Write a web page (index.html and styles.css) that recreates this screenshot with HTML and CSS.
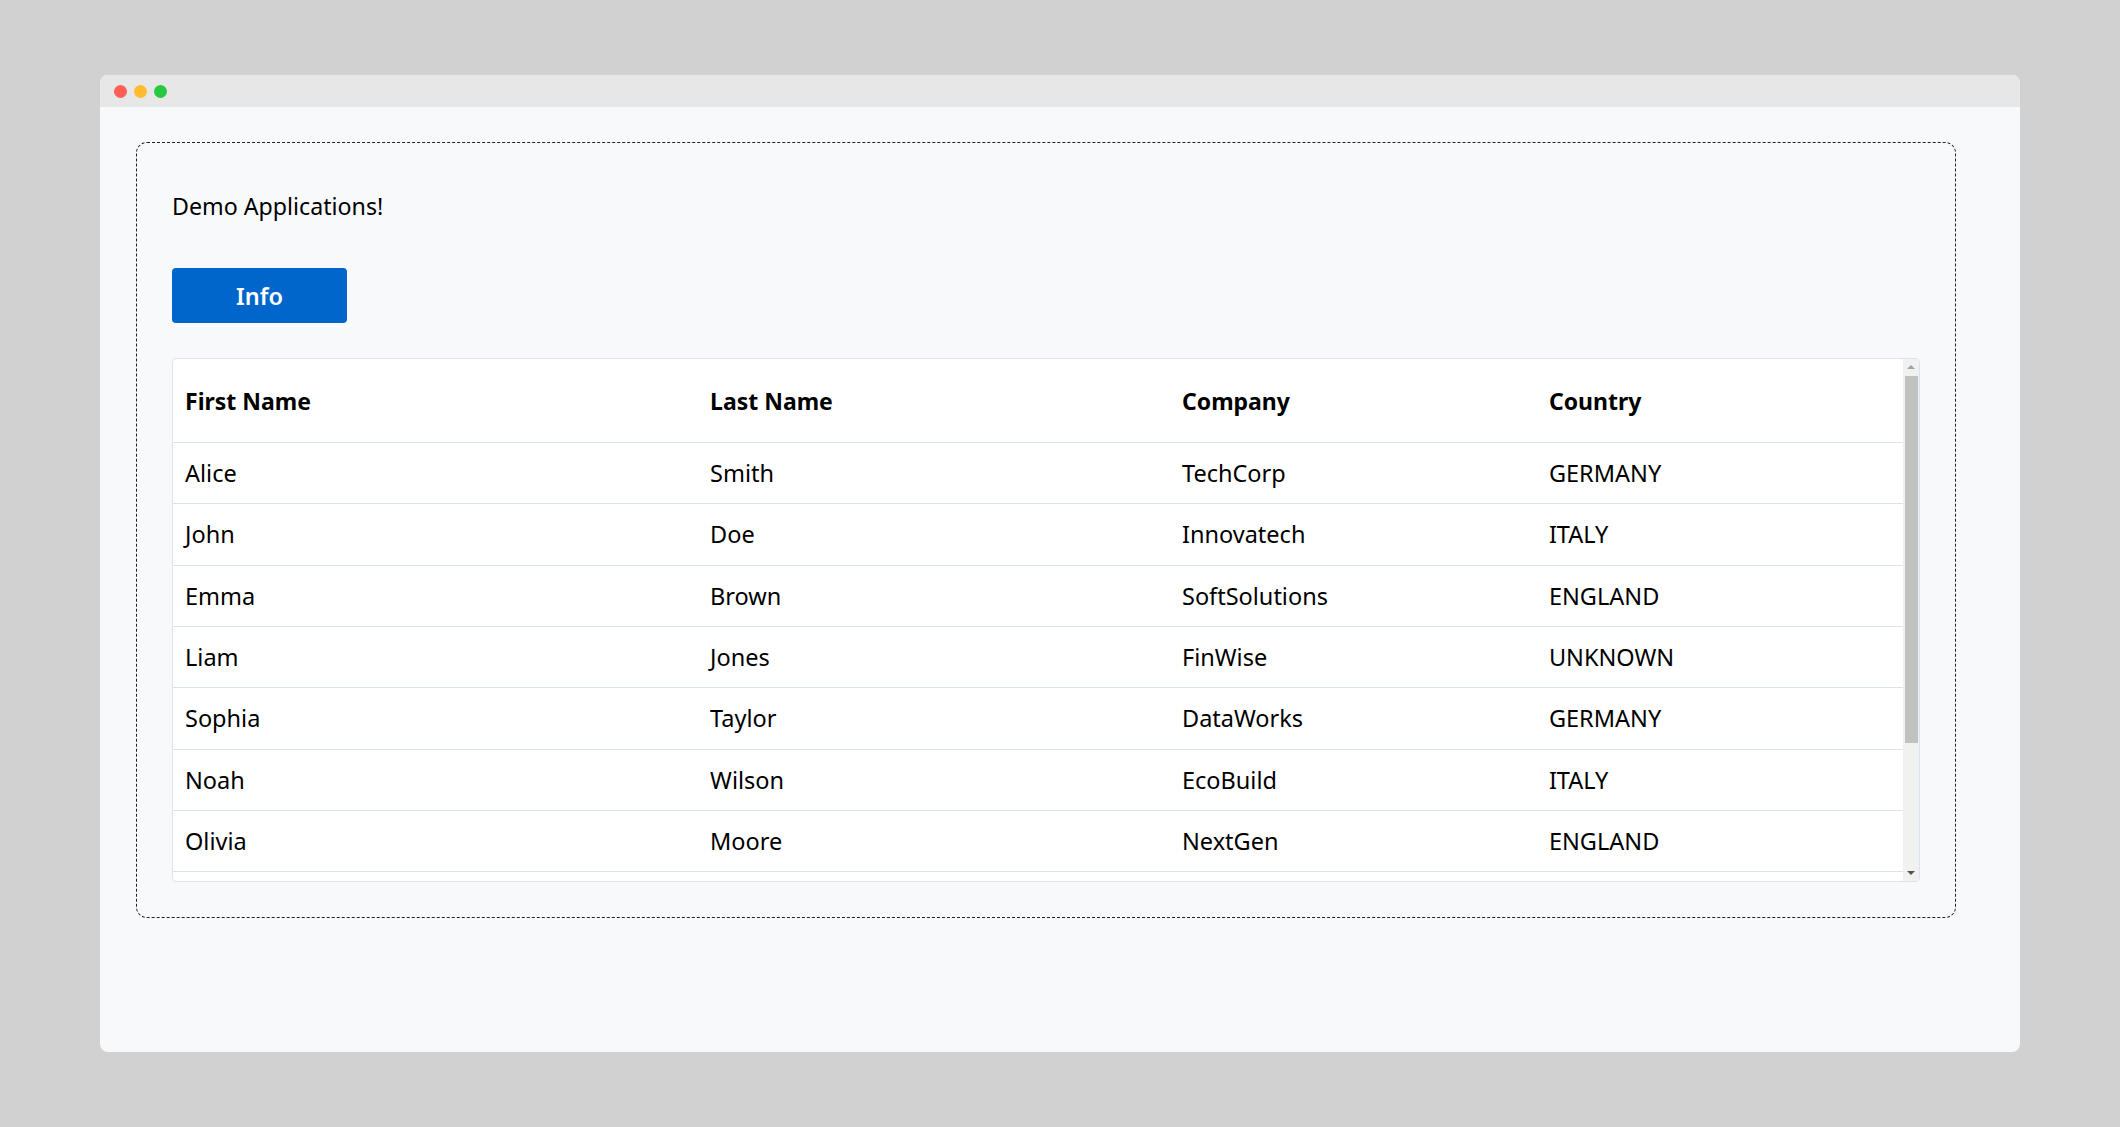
FILE: index.html
```html
<!DOCTYPE html>
<html lang="en">
<head>
<meta charset="utf-8">
<title>Demo Applications</title>
<link rel="stylesheet" href="styles.css">
</head>
<body>
<div class="stage">
  <div class="window">
    <div class="titlebar">
      <span class="dot dot-red"></span>
      <span class="dot dot-yellow"></span>
      <span class="dot dot-green"></span>
    </div>
    <div class="content">
      <div class="panel">
        <p class="heading">Demo Applications!</p>
        <button class="btn" type="button">Info</button>
        <div class="table-wrap">
          <div class="scroll-area">
            <table class="grid">
              <colgroup>
                <col class="c1"><col class="c2"><col class="c3"><col class="c4">
              </colgroup>
              <thead>
                <tr><th>First Name</th><th>Last Name</th><th>Company</th><th>Country</th></tr>
              </thead>
              <tbody>
                <tr><td>Alice</td><td>Smith</td><td>TechCorp</td><td>GERMANY</td></tr>
                <tr><td>John</td><td>Doe</td><td>Innovatech</td><td>ITALY</td></tr>
                <tr><td>Emma</td><td>Brown</td><td>SoftSolutions</td><td>ENGLAND</td></tr>
                <tr><td>Liam</td><td>Jones</td><td>FinWise</td><td>UNKNOWN</td></tr>
                <tr><td>Sophia</td><td>Taylor</td><td>DataWorks</td><td>GERMANY</td></tr>
                <tr><td>Noah</td><td>Wilson</td><td>EcoBuild</td><td>ITALY</td></tr>
                <tr><td>Olivia</td><td>Moore</td><td>NextGen</td><td>ENGLAND</td></tr>
              </tbody>
            </table>
          </div>
          <div class="scrollbar" aria-hidden="true">
            <div class="sb-btn"><span class="arrow-up"></span></div>
            <div class="sb-track"><div class="sb-thumb"></div></div>
            <div class="sb-btn"><span class="arrow-down"></span></div>
          </div>
        </div>
      </div>
    </div>
  </div>
</div>
</body>
</html>
```

FILE: styles.css
```css
html, body {
  margin: 0;
  padding: 0;
}
body {
  background: #d1d1d1;
  font-family: "Noto Sans", "Open Sans", "DejaVu Sans", sans-serif;
  color: #000;
}
.stage {
  padding: 75px 100px;
}
.window {
  width: 1920px;
  height: 977px;
  background: #f8f9fb;
  border-radius: 8px;
  overflow: hidden;
  display: flex;
  flex-direction: column;
}
.titlebar {
  height: 32px;
  flex: none;
  background: #e7e7e7;
  display: flex;
  align-items: center;
  gap: 7px;
  padding-left: 14px;
}
.dot {
  width: 13px;
  height: 13px;
  border-radius: 50%;
  display: block;
}
.dot-red { background: #ff5f57; }
.dot-yellow { background: #febc2e; }
.dot-green { background: #28c840; }
.content {
  padding: 35px 64px 0 36px;
}
.panel {
  border: 1px dashed #222;
  border-radius: 11px;
  padding: 35px;
}
.heading {
  margin: 0 0 35px 0;
  font-size: 23.2px;
  line-height: 54px;
  padding-top: 1px;
  height: 55px;
  box-sizing: border-box;
}
.btn {
  display: block;
  width: 175px;
  height: 55px;
  border: none;
  border-radius: 4px;
  background: #0066cc;
  color: #fff;
  font-family: inherit;
  font-size: 23.5px;
  font-weight: 600;
  padding: 0;
  margin: 0 0 35px 0;
}
.table-wrap {
  height: 522px;
  display: flex;
  border: 1px solid #dde3ec;
  border-radius: 4px;
  background: #fff;
  overflow: hidden;
}
.scroll-area {
  flex: 1;
  min-width: 0;
  overflow: hidden;
}
.scrollbar {
  width: 16px;
  flex: none;
  background: #f1f1f1;
  display: flex;
  flex-direction: column;
}
.sb-btn {
  height: 16px;
  flex: none;
  display: flex;
  align-items: center;
  justify-content: center;
}
.arrow-up {
  width: 0;
  height: 0;
  border-left: 4px solid transparent;
  border-right: 4px solid transparent;
  border-bottom: 4px solid #a3a3a3;
}
.arrow-down {
  width: 0;
  height: 0;
  border-left: 4px solid transparent;
  border-right: 4px solid transparent;
  border-top: 4px solid #505050;
}
.sb-track {
  flex: 1;
  padding: 1px 1px 0 2px;
}
.sb-thumb {
  height: 367px;
  background: #c1c1c1;
}
.grid {
  width: 100%;
  border-collapse: collapse;
  table-layout: fixed;
}
.c1 { width: 30.35%; }
.c2 { width: 27.28%; }
.c3 { width: 21.21%; }
.c4 { width: 21.16%; }
.grid th {
  text-align: left;
  font-size: 23px;
  font-weight: 700;
  line-height: 30px;
  padding: 27px 12px 26px;
  border-bottom: 1px solid #dde3ec;
}
.grid td {
  font-size: 23.5px;
  line-height: 30.33px;
  padding: 15px 12px;
  border-bottom: 1px solid #dde3ec;
}
```
